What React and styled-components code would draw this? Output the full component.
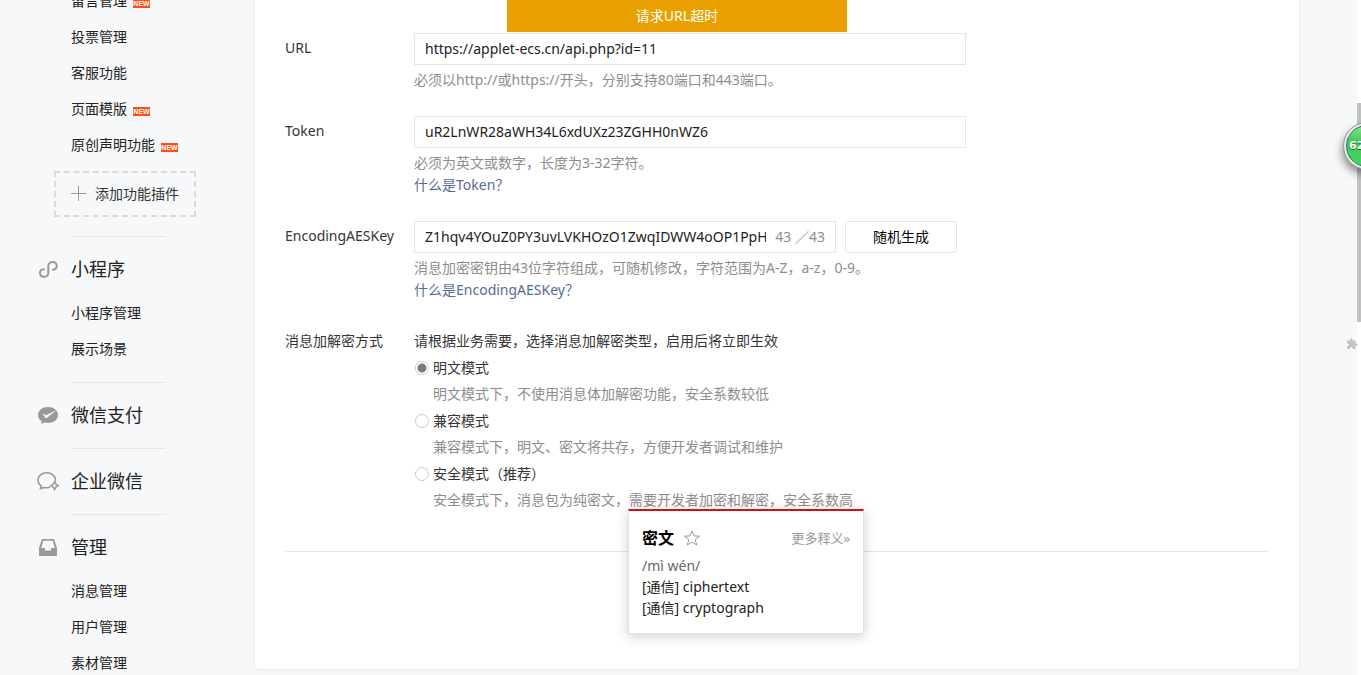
import React, { useState } from "react";
import styled, { createGlobalStyle } from "styled-components";

const GlobalStyle = createGlobalStyle`
  * {
    box-sizing: border-box;
  }
  body {
    margin: 0;
    background: #f7f8fa;
    color: #353535;
    font-family: "Noto Sans", "Noto Sans CJK SC", sans-serif;
    font-size: 14px;
  }
  input, button {
    font-family: inherit;
    font-size: inherit;
    color: inherit;
  }
  a {
    text-decoration: none;
    color: inherit;
  }
`;
const Page = styled.div`
  position: relative;
  display: flex;
  align-items: flex-start;
  height: 100vh;
  overflow: hidden;
`;
const Sidebar = styled.nav`
  flex: 0 0 255px;
  margin-top: -17px;
  padding-left: 71px;
  color: #222;
`;
const Section = styled.section`
  padding-bottom: 15px;
  & + & {
    padding-top: 15px;
  }
  & + &::before {
    content: "";
    display: block;
    width: 95px;
    height: 1px;
    margin: -15px 0 15px;
    background: #e4e6e8;
  }
`;
const SectionTitle = styled.h2`
  display: flex;
  align-items: center;
  gap: 12px;
  margin: 0 0 0 -34px;
  font-size: 18px;
  font-weight: 400;
  line-height: 35px;
  svg {
    flex: none;
    width: 22px;
    height: 22px;
  }
`;
const Menu = styled.ul`
  margin: ${(props) => (props.$first ? "0" : "8px 0 0")};
  padding: 0;
  list-style: none;
`;
const MenuItem = styled.li`
  height: 36px;
  line-height: 36px;
  a {
    display: flex;
    align-items: center;
    gap: 6px;
  }
`;
const NewBadge = styled.span`
  display: flex;
  justify-content: center;
  width: 17px;
  height: 9px;
  margin-top: 4px;
  background: #ff4e15;
  color: #fff;
  font: bold 7px/9px "Liberation Sans Narrow", "Liberation Sans", sans-serif;
`;
const AddPlugin = styled.button`
  display: flex;
  align-items: center;
  gap: 9px;
  width: 142px;
  height: 46px;
  margin: 8px 0 4px -17px;
  padding: 0 0 2px 15px;
  border: 2px dashed #d9dadc;
  background: none;
  color: #353535;
`;
const Main = styled.main`
  flex: 1;
  min-width: 0;
  margin-right: 62px;
  padding: 33px 30px 117px;
  border-radius: 0 0 4px 4px;
  background: #fff;
  box-shadow: 0 1px 3px rgba(0, 0, 0, 0.08);
`;
const Toast = styled.div`
  position: absolute;
  top: 0;
  left: 0;
  right: 7px;
  z-index: 2;
  width: 340px;
  margin: 0 auto;
  background: #eaa000;
  color: #fff;
  line-height: 32px;
  text-align: center;
`;
const Form = styled.form`
  display: flex;
  flex-direction: column;
  gap: 25px;
  padding-bottom: 36px;
  border-bottom: 1px solid #e4e6e8;
`;
const Row = styled.div`
  display: flex;
`;
const Label = styled.label`
  flex: 0 0 129px;
  line-height: 30px;
`;
const Field = styled.div`
  flex: 1;
  min-width: 0;
`;
const Controls = styled.div`
  display: flex;
  gap: 9px;
  margin-bottom: 4px;
`;
const InputBox = styled.div`
  display: flex;
  align-items: center;
  width: ${(props) => (props.$short ? "422px" : "552px")};
  height: 32px;
  padding: 0 10px 2px;
  border: 1px solid #e4e5e8;
  input {
    flex: 1;
    min-width: 0;
    height: 28px;
    padding: 0;
    border: 0;
    outline: none;
    background: none;
    color: #222;
  }
`;
const Counter = styled.span`
  padding-left: 9px;
  color: #8d8d8d;
`;
const RandomButton = styled.button`
  width: 112px;
  height: 32px;
  padding: 0 0 2px;
  border: 1px solid #e4e5e8;
  border-radius: 3px;
  background: #fff;
  color: #000;
`;
const Help = styled.p`
  margin: 0;
  color: #8d8d8d;
  line-height: 22px;
`;
const HelpLink = styled.a`
  && {
    color: #576b95;
  }
  display: block;
  line-height: 22px;
`;
const Intro = styled.p`
  margin: 0;
  line-height: 30px;
`;
const ModeLabel = styled.label`
  display: flex;
  align-items: center;
  gap: 4px;
  height: 24px;
  line-height: 24px;
`;
const Radio = styled.input`
  appearance: none;
  width: 14px;
  height: 14px;
  margin: 0 0 0 1px;
  border: 1px solid #ccc;
  border-radius: 50%;
  background: ${(props) =>
    props.checked
      ? "radial-gradient(circle, #7c7c7c 4px, #fff 5px)"
      : "#fff"};
`;
const ModeHelp = styled.div`
  position: relative;
  margin: 0 0 1px 19px;
  color: #8d8d8d;
  line-height: 28px;
`;
const Dictionary = styled.aside`
  position: absolute;
  top: 23px;
  left: 195px;
  width: 236px;
  height: 125px;
  padding: 14px 13px;
  border: 1px solid #e2e2e2;
  border-top: 2px solid #cc1414;
  background: #fff;
  box-shadow: 0 2px 12px rgba(0, 0, 0, 0.2);
  color: #222;
  line-height: 21px;
`;
const DictionaryHead = styled.div`
  display: flex;
  align-items: center;
  gap: 9px;
  height: 26px;
  margin-bottom: 4px;
  strong {
    color: #000;
    font-size: 16px;
  }
  a {
    margin-left: auto;
    color: #999;
    font-size: 13px;
  }
`;
const StarButton = styled.button`
  display: flex;
  padding: 0;
  border: 0;
  background: none;
`;
const Pinyin = styled.div`
  color: #666;
`;
const ScrollTrack = styled.div`
  position: absolute;
  top: 0;
  right: 0;
  bottom: 0;
  width: 4px;
  padding-top: 103px;
  background: #fff;
`;
const ScrollThumb = styled.div`
  height: 219px;
  background: #c1c1c1;
`;
const Ball = styled.div`
  position: absolute;
  top: 123px;
  right: -29px;
  width: 46px;
  height: 46px;
  padding-left: 3px;
  border: 2px solid #e9e9e9;
  border-radius: 50%;
  outline: 1px solid #999;
  background: linear-gradient(#8be08f, #43c85a 40%, #48d562);
  box-shadow: inset 0 0 0 1px #16845d, -2px 5px 8px rgba(0, 0, 0, 0.45);
  color: #fff;
  font: bold 11px/42px "DejaVu Sans", sans-serif;
  text-shadow: 0 1px 1px #246b35;
`;
const Puzzle = styled.svg`
  position: absolute;
  top: 338px;
  right: 3px;
  width: 12px;
  height: 12px;
`;

const MiniIcon = () => (
  <svg viewBox="0 0 22 22" fill="none" stroke="#999" strokeWidth="2" strokeLinecap="round">
    <path d="M7 10.2C4.8 10.3 3 11.8 3 14c0 2.200 1.700 3.800 4.100 3.800 2.400 0 4.200-1.600 4.200-3.800V7c0-2.200 1.800-3.900 4.300-3.900 2.300 0 4.100 1.500 4.100 3.700 0 2.100-1.700 3.700-3.700 3.900" />
  </svg>
);
const PayIcon = () => (
  <svg viewBox="0 1 22 22">
    <path
      fill="#999"
      d="M11 3C5.400 3 1 6.500 1 11c0 2.700 1.400 4.900 3.700 6.300L4.200 20l3.300-1.500c1.100.3 2.300.5 3.500.5 5.600 0 10-3.500 10-8s-4.400-8-10-8z"
    />
    <path fill="#f7f8fa" d="M5.500 9.200l3.500 2L19.600 6 9.800 13.900c-.7.600-1.400.5-1.800-.3z" />
  </svg>
);
const WorkIcon = () => (
  <svg viewBox="0 0 22 22" fill="none" stroke="#999" strokeWidth="1.600" strokeLinejoin="round">
    <path d="M18 10.600c.3-.7.400-1.100.4-1.800 0-4.100-3.800-7-8.700-7S1 4.900 1 9c0 2.500 1.300 4.600 3.400 5.900L3.300 17.800l3.800-1.400c2.200.6 4.300.4 6.200-.4" />
    <path strokeWidth="1.500" d="M17.600 10.800l1.300 2.400 2.500 1.400-2.500 1.400-1.300 2.800-1.300-2.800-2.500-1.400 2.500-1.400z" />
  </svg>
);
const ManageIcon = () => (
  <svg viewBox="0 1 22 22">
    <path
      fill="#999"
      fillRule="evenodd"
      d="M5.500 3h11c.5 0 .8.300.9.700L20 12v7c0 .6-.4 1-1 1H3c-.6 0-1-.4-1-1v-7l2.600-8.300c.1-.4.400-.7.900-.7zM6.300 4.800L4.200 12H8v2.500h6V12h3.800l-2.100-7.200z"
    />
  </svg>
);

const sections = [
  {
    items: [
      { name: "留言管理", isNew: true },
      { name: "投票管理" },
      { name: "客服功能" },
      { name: "页面模版", isNew: true },
      { name: "原创声明功能", isNew: true },
    ],
    addable: true,
  },
  {
    title: "小程序",
    icon: <MiniIcon />,
    items: [{ name: "小程序管理" }, { name: "展示场景" }],
  },
  { title: "微信支付", icon: <PayIcon /> },
  { title: "企业微信", icon: <WorkIcon /> },
  {
    title: "管理",
    icon: <ManageIcon />,
    items: [{ name: "消息管理" }, { name: "用户管理" }, { name: "素材管理" }],
  },
];

const modes = [
  {
    id: "plain",
    name: "明文模式",
    help: "明文模式下，不使用消息体加解密功能，安全系数较低",
  },
  {
    id: "compatible",
    name: "兼容模式",
    help: "兼容模式下，明文、密文将共存，方便开发者调试和维护",
  },
  {
    id: "safe",
    name: "安全模式（推荐）",
    help: "安全模式下，消息包为纯密文，需要开发者加密和解密，安全系数高",
  },
];

const DictionaryCard = () => (
  <Dictionary>
    <DictionaryHead>
      <strong>密文</strong>
      <StarButton type="button" aria-label="收藏">
        <svg width="18" height="18" viewBox="0 0 18 18" fill="none" stroke="#999">
          <path d="M9 1.800l2 5.100 5.500.3-4.300 3.400 1.500 5.400L9 13l-4.700 3 1.500-5.400L1.500 7.200 7 6.900z" />
        </svg>
      </StarButton>
      <a href="#more">更多释义»</a>
    </DictionaryHead>
    <Pinyin>/mì wén/</Pinyin>
    <div>[通信] ciphertext</div>
    <div>[通信] cryptograph</div>
  </Dictionary>
);

const App = () => {
  const [mode, setMode] = useState("plain");
  const [url, setUrl] = useState("https://applet-ecs.cn/api.php?id=11");
  const [token, setToken] = useState("uR2LnWR28aWH34L6xdUXz23ZGHH0nWZ6");
  const [aesKey, setAesKey] = useState(
    "Z1hqv4YOuZ0PY3uvLVKHOzO1ZwqIDWW4oOP1PpHk7Qa"
  );
  return (
    <>
      <GlobalStyle />
      <Page>
        <Sidebar>
          {sections.map((section, index) => (
            <Section key={index}>
              {section.title && (
                <SectionTitle>
                  {section.icon}
                  {section.title}
                </SectionTitle>
              )}
              {section.items && (
                <Menu $first={!section.title}>
                  {section.items.map((item) => (
                    <MenuItem key={item.name}>
                      <a href="#menu">
                        {item.name}
                        {item.isNew && <NewBadge>NEW</NewBadge>}
                      </a>
                    </MenuItem>
                  ))}
                </Menu>
              )}
              {section.addable && (
                <AddPlugin type="button">
                  <svg width="15" height="15" viewBox="0 0 15 15" stroke="#999">
                    <path d="M0 7.500h15M7.500 0v15" />
                  </svg>
                  添加功能插件
                </AddPlugin>
              )}
            </Section>
          ))}
        </Sidebar>
        <Main>
          <Form>
            <Row>
              <Label htmlFor="url">URL</Label>
              <Field>
                <Controls>
                  <InputBox>
                    <input id="url" value={url} onChange={(e) => setUrl(e.target.value)} />
                  </InputBox>
                </Controls>
                <Help>必须以http://或https://开头，分别支持80端口和443端口。</Help>
              </Field>
            </Row>
            <Row>
              <Label htmlFor="token">Token</Label>
              <Field>
                <Controls>
                  <InputBox>
                    <input id="token" value={token} onChange={(e) => setToken(e.target.value)} />
                  </InputBox>
                </Controls>
                <Help>必须为英文或数字，长度为3-32字符。</Help>
                <HelpLink href="#token-help">什么是Token？</HelpLink>
              </Field>
            </Row>
            <Row>
              <Label htmlFor="aes">EncodingAESKey</Label>
              <Field>
                <Controls>
                  <InputBox $short>
                    <input
                      id="aes"
                      maxLength={43}
                      value={aesKey}
                      onChange={(e) => setAesKey(e.target.value)}
                    />
                    <Counter>{aesKey.length} ／43</Counter>
                  </InputBox>
                  <RandomButton type="button">随机生成</RandomButton>
                </Controls>
                <Help>
                  消息加密密钥由43位字符组成，可随机修改，字符范围为A-Z，a-z，0-9。
                </Help>
                <HelpLink href="#aes-help">什么是EncodingAESKey？</HelpLink>
              </Field>
            </Row>
            <Row role="radiogroup" aria-labelledby="mode-label">
              <Label as="span" id="mode-label">
                消息加解密方式
              </Label>
              <Field>
                <Intro>请根据业务需要，选择消息加解密类型，启用后将立即生效</Intro>
                {modes.map((item) => (
                  <React.Fragment key={item.id}>
                    <ModeLabel>
                      <Radio
                        type="radio"
                        name="mode"
                        checked={mode === item.id}
                        onChange={() => setMode(item.id)}
                      />
                      {item.name}
                    </ModeLabel>
                    <ModeHelp>
                      {item.help}
                      {item.id === "safe" && <DictionaryCard />}
                    </ModeHelp>
                  </React.Fragment>
                ))}
              </Field>
            </Row>
          </Form>
        </Main>
        <Toast role="alert">请求URL超时</Toast>
        <ScrollTrack>
          <ScrollThumb />
        </ScrollTrack>
        <Ball>62</Ball>
        <Puzzle viewBox="0 0 24 24" fill="#c4c4c4">
          <path d="M20.500 11H19V7a2 2 0 0 0-2-2h-4V3.500a2.500 2.500 0 0 0-5 0V5H4a2 2 0 0 0-2 2v3.800h1.500a2.700 2.700 0 0 1 0 5.400H2V20a2 2 0 0 0 2 2h3.800v-1.500a2.700 2.700 0 0 1 5.400 0V22H17a2 2 0 0 0 2-2v-4h1.500a2.500 2.500 0 0 0 0-5z" />
        </Puzzle>
      </Page>
    </>
  );
};

export default App;
